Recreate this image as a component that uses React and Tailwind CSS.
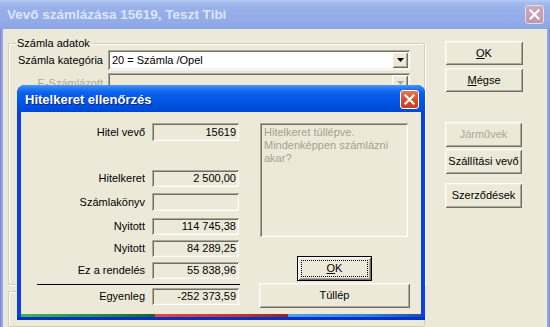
const sunk =
  "shadow-[inset_1px_1px_0_#ACA899,inset_-1px_-1px_0_#FFFFFF,inset_2px_2px_0_#716F64,inset_-2px_-2px_0_#F1EFE2]";
const raised =
  "shadow-[inset_1px_1px_0_#FFFFFF,inset_-1px_-1px_0_#716F64,inset_2px_2px_0_#F1EFE2,inset_-2px_-2px_0_#ACA899]";

function XIcon({ size = 11 }) {
  return (
    <svg width={size} height={size} viewBox="0 0 11 11">
      <path d="M1.5 1.5 L9.5 9.5 M9.5 1.5 L1.5 9.5" stroke="#FFFFFF" strokeWidth="2.2" strokeLinecap="square" />
    </svg>
  );
}

function Arrow({ color = "#000000" }) {
  return (
    <svg width="7" height="4" viewBox="0 0 7 4">
      <path d="M0 0 H7 L3.5 4 Z" fill={color} />
    </svg>
  );
}

function Btn({ children, w = "w-[78px]", h = "h-[24px]", disabled = false, cls = "" }) {
  return (
    <div
      className={`${w} ${h} ${raised} bg-[#ECE9D8] flex items-center justify-center ${
        disabled ? "text-[#ACA899]" : "text-black"
      } ${cls}`}
    >
      {children}
    </div>
  );
}

function Field({ label, value, cls = "", h = "h-[17px]" }) {
  return (
    <div className={`flex items-center ${h} ${cls}`}>
      <div className="w-[108px] text-right leading-[13px]">{label}</div>
      <div className={`ml-[7px] w-[87px] h-full ${sunk} bg-[#ECE9D8] flex items-center justify-end pr-[3px] leading-[13px]`}>
        {value}
      </div>
    </div>
  );
}

export default function App() {
  return (
    <div className="relative w-[550px] h-[327px] overflow-hidden bg-[#ECE9D8] font-['Liberation_Sans',Arial,sans-serif] text-[11px] text-black">
      {/* outer title bar (inactive) */}
      <div className="h-[29px] flex items-center pl-[7px] pr-[6px] bg-[linear-gradient(to_bottom,#B9CBF3_0px,#A3BAEE_3px,#97AFEA_10px,#93ABE8_22px,#8CA3E3_29px)]">
        <span className="mt-[1px] text-[13.5px] font-bold text-[#DCE6F9] leading-[16px]">Vevő számlázása 15619, Teszt Tibi</span>
        <div className="ml-auto w-[19px] h-[19px] rounded-[3px] border border-[#E9DCE6] bg-[linear-gradient(to_bottom,#CFA9C0,#BE97AE)] flex items-center justify-center">
          <XIcon size={11} />
        </div>
      </div>

      {/* outer body */}
      <div className="flex h-[298px]">
        <div className="w-[3px] bg-[linear-gradient(to_right,#7A8AD9,#A2AEEE)]" />
        <div className="flex-1 flex">
          <div className="pl-[5px] pt-[14px] flex flex-col">
            {/* group box */}
            <div className="relative w-[417px] h-[266px] border border-[#D0D0BF] rounded-[2px] shadow-[inset_1px_1px_0_#FFFFFF,1px_1px_0_#FFFFFF]">
              <span className="absolute left-[7px] -top-[7px] px-[1px] bg-[#ECE9D8] leading-[13px]">Számla adatok</span>
              <div className="pt-[6px] flex flex-col">
                <div className="flex items-center h-[20px]">
                  <div className="w-[94px] text-right leading-[13px]">Számla kategória</div>
                  <div className={`ml-[5px] w-[302px] h-[20px] ${sunk} bg-white flex items-stretch p-[2px]`}>
                    <div className="flex-1 flex items-center pl-[2px] leading-[13px]">20 = Számla /Opel</div>
                    <div className={`w-[16px] ${raised} bg-[#ECE9D8] flex items-center justify-center`}>
                      <Arrow />
                    </div>
                  </div>
                </div>
                <div className="flex items-center h-[20px] mt-[3px]">
                  <div className="w-[94px] text-right leading-[13px] text-[#ACA899]">E-Számlázott</div>
                  <div className={`ml-[5px] w-[302px] h-[20px] ${sunk} bg-[#ECE9D8] flex items-stretch p-[2px]`}>
                    <div className="flex-1" />
                    <div className={`w-[16px] ${raised} bg-[#ECE9D8] flex items-center justify-center`}>
                      <Arrow color="#ACA899" />
                    </div>
                  </div>
                </div>
              </div>
            </div>
            {/* second group box (mostly hidden) */}
            <div className="mt-[6px] w-[417px] h-[40px] border border-[#D0D0BF] rounded-[2px] shadow-[inset_1px_1px_0_#FFFFFF]">
              <div className={`ml-[99px] mt-[7px] w-[304px] h-[20px] ${sunk} bg-white`} />
            </div>
          </div>

          {/* right buttons */}
          <div className="ml-[20px] pt-[12px] flex flex-col">
            <Btn>
              <span className="underline underline-offset-1">O</span>K
            </Btn>
            <Btn cls="mt-[3px]">
              <span className="underline underline-offset-1">M</span>égse
            </Btn>
            <Btn w="w-[77px]" h="h-[25px]" cls="mt-[30px]" disabled>
              Járművek
            </Btn>
            <Btn w="w-[77px]" h="h-[25px]" cls="mt-[2px]">
              Szállítási vevő
            </Btn>
            <Btn w="w-[77px]" h="h-[25px]" cls="mt-[9px]">
              Szerződések
            </Btn>
          </div>
        </div>
        <div className="w-[3px] bg-[linear-gradient(to_right,#A2AEEE,#7A8AD9)]" />
      </div>

      {/* modal dialog window */}
      <div className="absolute left-[17px] top-[85px] w-[408px] h-[235px] flex flex-col rounded-t-[8px] bg-[linear-gradient(to_right,#0A3FE0,#0831D9_50%,#0A3FE0)] overflow-hidden">
        <div className="h-[27px] flex items-center pl-[8px] pr-[6px] bg-[linear-gradient(to_bottom,#4C98FB_0px,#2A7BF6_3px,#0A60EB_8px,#0056E5_16px,#004CD9_24px,#0047CF_27px)]">
          <span className="mt-[3px] text-[13px] font-bold text-white leading-[16px] [text-shadow:1px_1px_0_#0A1F8C]">
            Hitelkeret ellenőrzés
          </span>
          <div className="ml-auto mt-[1px] w-[19px] h-[19px] rounded-[3px] border border-white bg-[linear-gradient(to_bottom,#E87A57,#D84E28_50%,#C5411D)] flex items-center justify-center">
            <XIcon size={11} />
          </div>
        </div>

        <div className="mx-[4px] h-[202px] bg-[#ECE9D8] flex pl-[16px] pt-[11px]">
          {/* left column: values */}
          <div className="w-[203px] flex flex-col">
            <Field label="Hitel vevő" value="15619" h="h-[18px]" />
            <Field label="Hitelkeret" value="2 500,00" cls="mt-[29px]" />
            <Field label="Számlakönyv" value="" cls="mt-[6px]" h="h-[18px]" />
            <Field label="Nyitott" value="114 745,38" cls="mt-[7px]" />
            <Field label="Nyitott" value="84 289,25" cls="mt-[5px]" />
            <Field label="Ez a rendelés" value="55 838,96" cls="mt-[5px]" />
            <div className="mt-[5px] h-[1px] bg-black" />
            <Field label="Egyenleg" value="-252 373,59" cls="mt-[3px]" />
          </div>

          {/* right column: message and buttons */}
          <div className="ml-[19px] w-[151px] flex flex-col">
            <div className={`ml-[1px] w-[148px] h-[114px] ${sunk} bg-[#ECE9D8] pl-[4px] pt-[3px] pr-[6px] text-[#A6A291] leading-[13px]`}>
              Hitelkeret túllépve. Mindenképpen számlázni akar?
            </div>
            <div className={`mt-[19px] self-center w-[75px] h-[25px] border border-black bg-[#ECE9D8] ${raised} flex p-[3px]`}>
              <div className="flex-1 border border-dotted border-black flex items-center justify-center">
                <span>
                  <span className="underline underline-offset-1">O</span>K
                </span>
              </div>
            </div>
            <Btn w="w-[151px]" h="h-[25px]" cls="mt-[2px]">
              Túllép
            </Btn>
          </div>
        </div>

        {/* colored bottom strip */}
        <div className="mx-[4px] h-[3px] flex">
          <div className="w-[134px] bg-[linear-gradient(to_right,#3DB654,#2A8A44_60%,#1E5E34)]" />
          <div className="w-[133px] bg-[linear-gradient(to_right,#E8473E,#C83431_60%,#8E2727)]" />
          <div className="flex-1 bg-[linear-gradient(to_right,#4FA0F2,#3680DA_60%,#1E4FA8)]" />
        </div>
        <div className="h-[3px] bg-[#0630C6]" />
      </div>
    </div>
  );
}
